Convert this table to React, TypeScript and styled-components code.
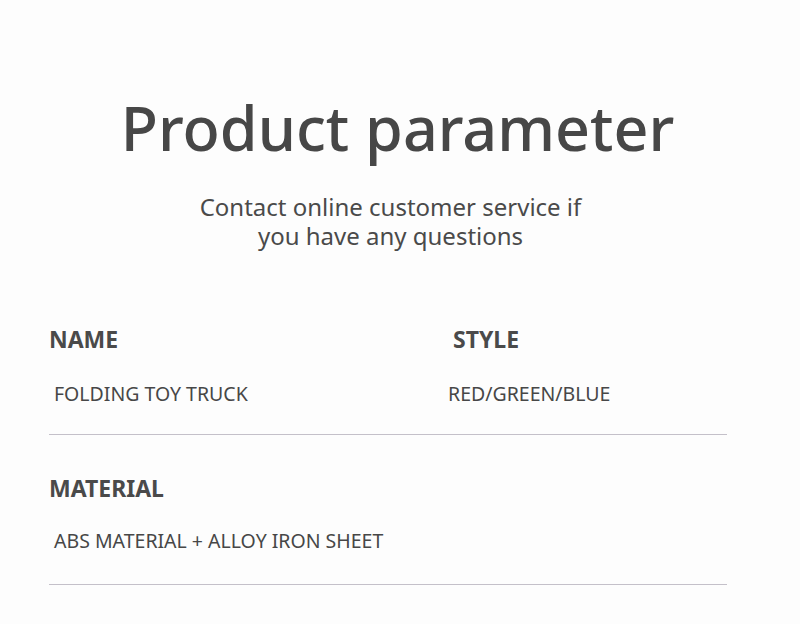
import React from "react";
import styled, { createGlobalStyle } from "styled-components";

const Global = createGlobalStyle`
  html, body { margin: 0; padding: 0; background: #fdfdfd; }
  body { font-family: "Noto Sans", "Open Sans", sans-serif; color: #454545; }
`;

const Page = styled.div`
  width: 800px;
  height: 624px;
  box-sizing: border-box;
  background: #fdfdfd;
  display: flex;
  flex-direction: column;
  align-items: center;
  overflow: hidden;
`;

const Title = styled.h1`
  margin: 86px 0 0 -5px;
  font-size: 61px;
  font-weight: 500;
  line-height: 84px;
  color: #474747;
  text-align: center;
`;

const Subtitle = styled.p`
  margin: 22px 0 0 -19px;
  font-size: 24px;
  line-height: 29px;
  font-weight: 400;
  color: #4a4a4a;
  text-align: center;
  width: 400px;
`;

const Table = styled.div`
  margin: 75px 0 0 49px;
  align-self: flex-start;
  width: 678px;
  display: flex;
  flex-direction: column;
`;

const Row = styled.div<{ $gap: number; $pad: number }>`
  display: grid;
  grid-template-columns: 399px 1fr;
  border-bottom: 1px solid #c4c0c9;
  padding-bottom: ${(p) => p.$pad}px;
  margin-bottom: 39px;
  --value-gap: ${(p) => p.$gap}px;
`;

const Cell = styled.div`
  display: flex;
  flex-direction: column;
`;

const Label = styled.div<{ $indent?: number }>`
  font-size: 23px;
  font-weight: 700;
  line-height: 28px;
  color: #4a4a4a;
  padding-left: ${(p) => p.$indent ?? 0}px;
`;

const Value = styled.div<{ $indent?: number }>`
  margin-top: var(--value-gap);
  font-size: 19.5px;
  line-height: 26px;
  color: #474747;
  padding-left: ${(p) => p.$indent ?? 0}px;
`;

export default function App() {
  return (
    <>
      <Global />
      <Page>
        <Title>Product parameter</Title>
        <Subtitle>Contact online customer service if you have any questions</Subtitle>
        <Table>
          <Row $gap={28} $pad={27}>
            <Cell>
              <Label>NAME</Label>
              <Value $indent={5}>FOLDING TOY TRUCK</Value>
            </Cell>
            <Cell>
              <Label $indent={5}>STYLE</Label>
              <Value>RED/GREEN/BLUE</Value>
            </Cell>
          </Row>
          <Row $gap={26} $pad={30}>
            <Cell>
              <Label>MATERIAL</Label>
              <Value $indent={5}>ABS MATERIAL + ALLOY IRON SHEET</Value>
            </Cell>
            <Cell />
          </Row>
        </Table>
      </Page>
    </>
  );
}
